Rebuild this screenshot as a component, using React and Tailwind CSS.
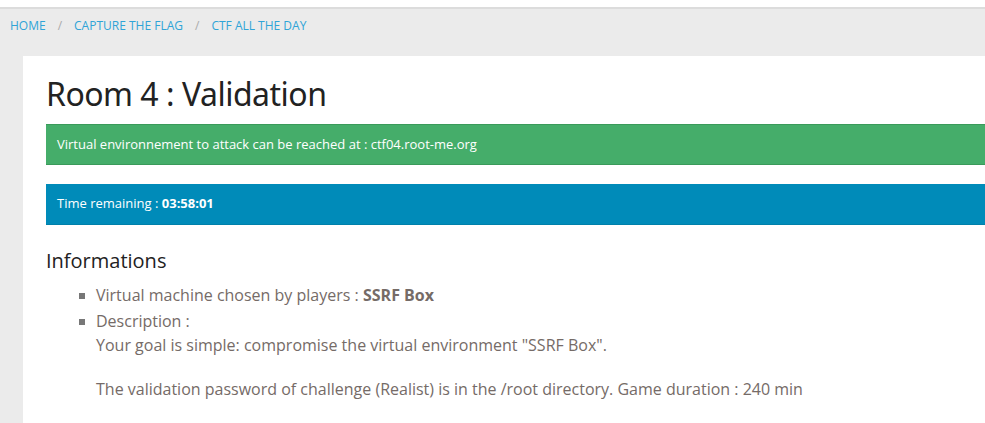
export default function App() {
  const font = { fontFamily: '"Open Sans", "Noto Sans", sans-serif' };
  return (
    <div className="w-[985px] h-[423px] overflow-hidden bg-white" style={font}>
      <div className="h-[7px] bg-white" />
      <div className="h-[2px] bg-[#dcdcdc]" />
      <div className="bg-[#ebebeb] pl-[23px]">
        <div className="h-[47px] -ml-[13px] pt-[8px] flex items-start text-[12px] leading-[18px] text-[#2fa4d7] uppercase">
          <span>Home</span>
          <span className="mx-[12px] text-[#aaa]">/</span>
          <span>Capture the flag</span>
          <span className="mx-[12px] text-[#aaa]">/</span>
          <span>CTF all the day</span>
        </div>
        <div className="bg-white pl-[23px] pt-[18px] h-[368px]">
          <h1 className="text-[32px] leading-[40px] text-[#222] tracking-[-0.5px]" style={{ fontFamily: '"Noto Sans", sans-serif' }}>
            Room 4 : Validation
          </h1>
          <div className="mt-[10px] h-[41px] bg-[#45ad6a] border-y border-[#3a9a5a] flex items-center pl-[11px] text-[13px] text-white">
            Virtual environnement to attack can be reached at : ctf04.root-me.org
          </div>
          <div className="mt-[19px] h-[41px] bg-[#008bb9] border-b border-[#0080aa] flex items-center pl-[11px] text-[13px] text-white">
            <span>Time remaining : <b>03:58:01</b></span>
          </div>
          <h2 className="mt-[22px] text-[20px] leading-[28px] text-[#222]">Informations</h2>
          <ul className="mt-[8px] pl-[33px] text-[16px] leading-[24px] text-[#756b67]">
            <li className="flex mb-[2px]">
              <span className="w-[6px] h-[6px] bg-[#777] mt-[10px] mr-[11px] shrink-0" />
              <span>Virtual machine chosen by players : <b>SSRF Box</b></span>
            </li>
            <li className="flex">
              <span className="w-[6px] h-[6px] bg-[#777] mt-[10px] mr-[11px] shrink-0" />
              <div>
                <div>Description :</div>
                <p className="mb-[20px]">Your goal is simple: compromise the virtual environment "SSRF Box".</p>
                <p>The validation password of challenge (Realist) is in the /root directory. Game duration : 240 min</p>
              </div>
            </li>
          </ul>
        </div>
      </div>
    </div>
  );
}
